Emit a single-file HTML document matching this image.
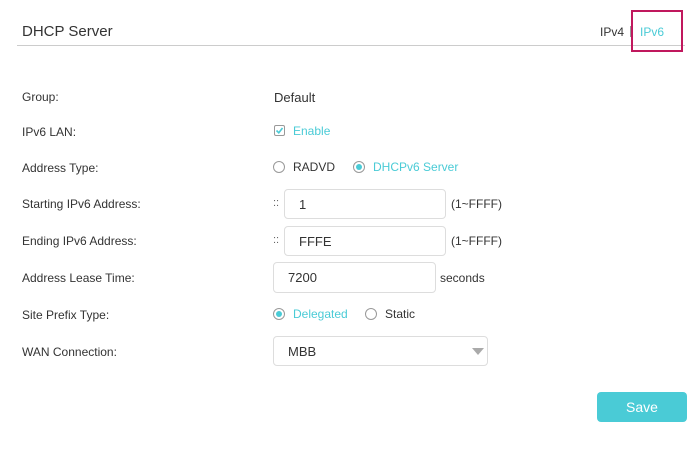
<!DOCTYPE html><html><head><style>
body{margin:0;width:692px;height:449px;background:#fff;font-family:"Liberation Sans",sans-serif;position:relative;overflow:hidden;color:#333}
.a{position:absolute;white-space:nowrap}
.l{font-size:12px;color:#333;left:22px}
.t{font-size:13px}
.c{color:#4acbd6}
.in{position:absolute;border:1px solid #ddd;border-radius:4px;box-sizing:border-box;font-size:13px;color:#333;padding-left:14px;display:flex;align-items:center}
.r{position:absolute;width:12px;height:12px;border:1px solid #999;border-radius:50%;box-sizing:border-box}
.r.on::after{content:"";position:absolute;left:2px;top:2px;width:6px;height:6px;border-radius:50%;background:#4acbd6}
</style></head><body>
<div class="a" style="left:22px;top:23px;font-size:15px;color:#333">DHCP Server</div>
<div class="a" style="left:17px;top:45px;width:668px;height:1px;background:#ccc"></div>
<div class="a" style="left:600px;top:25px;font-size:12px">IPv4</div>
<div class="a" style="left:630px;top:26px;width:1px;height:11px;background:#999"></div>
<div class="a c" style="left:640px;top:25px;font-size:12px">IPv6</div>
<div class="a" style="left:631px;top:10px;width:52px;height:42px;border:2px solid #c0185d;box-sizing:border-box"></div>

<div class="a l" style="top:90px">Group:</div>
<div class="a t" style="left:274px;top:90px">Default</div>
<div class="a l" style="top:125px">IPv6 LAN:</div>
<div class="a" style="left:274px;top:125px;width:11px;height:11px;border:1px solid #999;border-radius:2px;box-sizing:border-box"><svg width="9" height="9" style="position:absolute;left:0;top:0"><path d="M1.5 4.5 L3.8 6.8 L7.5 2" stroke="#4acbd6" stroke-width="1.6" fill="none"/></svg></div>
<div class="a c t" style="left:293px;top:124px;font-size:12px">Enable</div>
<div class="a l" style="top:161px">Address Type:</div>
<div class="r" style="left:273px;top:161px"></div>
<div class="a" style="left:293px;top:160px;font-size:12px">RADVD</div>
<div class="r on" style="left:353px;top:161px"></div>
<div class="a c" style="left:373px;top:160px;font-size:12px">DHCPv6 Server</div>
<div class="a l" style="top:197px">Starting IPv6 Address:</div>
<div class="a" style="left:273px;top:197px;font-size:11px;color:#666">::</div>
<div class="in" style="left:284px;top:189px;width:162px;height:30px">1</div>
<div class="a" style="left:451px;top:197px;font-size:12px">(1~FFFF)</div>
<div class="a l" style="top:234px">Ending IPv6 Address:</div>
<div class="a" style="left:273px;top:234px;font-size:11px;color:#666">::</div>
<div class="in" style="left:284px;top:226px;width:162px;height:30px">FFFE</div>
<div class="a" style="left:451px;top:234px;font-size:12px">(1~FFFF)</div>
<div class="a l" style="top:271px">Address Lease Time:</div>
<div class="in" style="left:273px;top:262px;width:163px;height:31px">7200</div>
<div class="a" style="left:440px;top:271px;font-size:12px">seconds</div>
<div class="a l" style="top:308px">Site Prefix Type:</div>
<div class="r on" style="left:273px;top:308px"></div>
<div class="a c" style="left:293px;top:307px;font-size:12px">Delegated</div>
<div class="r" style="left:365px;top:308px"></div>
<div class="a" style="left:385px;top:307px;font-size:12px">Static</div>
<div class="a l" style="top:345px">WAN Connection:</div>
<div class="in" style="left:273px;top:336px;width:215px;height:30px">MBB</div>
<div class="a" style="left:472px;top:348px;width:0;height:0;border-left:6px solid transparent;border-right:6px solid transparent;border-top:7px solid #aaa"></div>
<div class="a" style="left:597px;top:392px;width:90px;height:30px;background:#4acbd6;border-radius:4px;color:#fff;font-size:14px;text-align:center;line-height:30px">Save</div>
</body></html>
